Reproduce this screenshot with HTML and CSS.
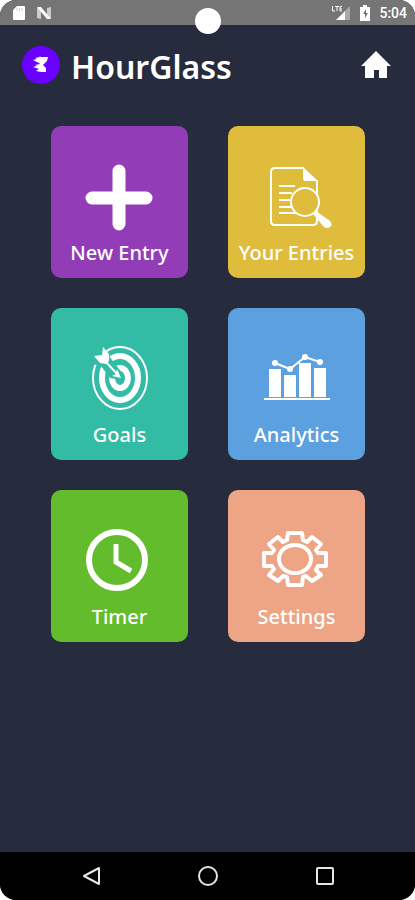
FILE: index.html
```html
<!DOCTYPE html>
<html lang="en">
<head>
  <meta charset="UTF-8" />
  <meta name="viewport" content="width=device-width, initial-scale=1.0"/>
  <title>HourGlass</title>
  <link rel="stylesheet" href="styles.css">
</head>
<body>

<div class="phone">
  <div class="status-bar">
    <div class="status-group">
      <svg width="14" height="16" viewBox="0 0 14 16" aria-hidden="true">
        <path d="M5 1h7q1 0 1 1v12q0 1-1 1H2q-1 0-1-1V5z" fill="#fff"/>
        <path d="M5 3v3M7.500 3v3M10 3v3" stroke="#ccc"/>
      </svg>
      <svg width="16" height="16" viewBox="0 0 16 16" aria-hidden="true">
        <path d="M1 3l4-1v12l-4-1zM11 3l4-1v12l-4-1z" fill="#ccc"/>
        <path d="M1 2h4l10 12h-4z" fill="#fff"/>
      </svg>
    </div>
    <span class="camera"></span>
    <div class="status-group status-right">
      <svg width="20" height="16" viewBox="0 0 20 16" aria-hidden="true">
        <path d="M19 1v14h-5V6z" fill="#aaa"/>
        <path d="M14 6v9H5z" fill="#fff"/>
        <path d="M1.500 1v5H4M4 1.500h4M6 1.500V6M11 1.500H9V6h2M9 4h2" fill="none" stroke="#fff"/>
      </svg>
      <svg width="12" height="16" viewBox="0 0 12 16" aria-hidden="true">
        <path d="M4 0h4v2h3v14H1V2h3z" fill="#fff"/>
        <path d="M7 4L4 9h2v4l3-5H7z" fill="#757575"/>
      </svg>
      <span class="clock">5:04</span>
    </div>
  </div>

  <header class="header">
    <svg class="logo" viewBox="0 0 40 40" aria-hidden="true">
      <circle cx="20" cy="20" r="19" fill="#6a00ff"/>
      <path d="M18 11l2 1h7l-1 4-4 4 3 3v4h-5l-5-1 3-2-6-2 4-1-2-1 5-1-1-1-6-3 4-1-2-1 5-1z" fill="#fff"/>
    </svg>
    <h1>HourGlass</h1>
    <a class="home" href="#" aria-label="Home">
      <svg width="32" height="32" viewBox="0 0 32 32" aria-hidden="true">
        <path d="M16 2L1 17h4v12h9v-8h5v8h8V17h4z" fill="#fff"/>
      </svg>
    </a>
  </header>

  <main class="menu">
    <a class="tile new-entry" href="#">
      <svg class="icon" viewBox="0 0 80 80" aria-hidden="true">
        <path d="M39 13v53M12 40h54" stroke-width="13" stroke-linecap="round"/>
      </svg>
      <span>New Entry</span>
    </a>

    <a class="tile entries" href="#">
      <svg class="icon" viewBox="0 0 80 80" aria-hidden="true">
        <path d="M60 22v41q0 4-4 4H18q-4 0-4-4V14q0-4 4-4h29" stroke-width="2"/>
        <path class="solid" d="M46 9l15 14H48q-2 0-2-2z"/>
        <path d="M22 28h16M22 35h13M22 42h11M22 49h12M22 55h17" stroke-width="2"/>
        <circle class="lens" cx="48" cy="44" r="14" stroke-width="2"/>
        <path class="solid" d="M56 56l3-3 14 10q3 4 0 6-3 2-6 0z"/>
      </svg>
      <span>Your Entries</span>
    </a>

    <a class="tile goals" href="#">
      <svg class="icon" viewBox="0 0 80 80" aria-hidden="true">
        <ellipse cx="40" cy="38" rx="27" ry="31" stroke-width="2"/>
        <ellipse cx="40" cy="38" rx="18" ry="22" stroke-width="6"/>
        <ellipse cx="40" cy="38" rx="8" ry="10" stroke-width="6"/>
        <path class="cut" d="M12 8h13l4 8 13 17v7l-12-2-9-12-9-2z"/>
        <path class="solid" d="M14 16l8-1 1-8 6 7v7l-3 3-6-1z"/>
        <path d="M25 21l14 15" stroke-width="2"/>
        <path class="solid" d="M41 38l-9-2 4-2 1-5z"/>
      </svg>
      <span>Goals</span>
    </a>

    <a class="tile analytics" href="#">
      <svg class="icon" viewBox="0 0 80 80" aria-hidden="true">
        <path class="solid" d="M12 29h12v28H12zM27 35h12v22H27zM42 23h12v34H42zM57 28h12v29H57z"/>
        <path d="M7 59h66" stroke-width="2"/>
        <path d="M18 23l15 6 15-12 15 5" stroke-width="2"/>
        <g class="solid">
          <circle cx="18" cy="23" r="3"/>
          <circle cx="33" cy="29" r="3"/>
          <circle cx="48" cy="17" r="3"/>
          <circle cx="63" cy="22" r="3"/>
        </g>
      </svg>
      <span>Analytics</span>
    </a>

    <a class="tile timer" href="#">
      <svg class="icon" viewBox="0 0 80 80" aria-hidden="true">
        <circle cx="37" cy="38" r="28" stroke-width="6"/>
        <path d="M36 22v18l15 9" stroke-width="5"/>
      </svg>
      <span>Timer</span>
    </a>

    <a class="tile settings" href="#">
      <svg class="icon" viewBox="0 0 80 80" aria-hidden="true">
        <path d="M31 11h14l1 7 4 2 5-5 9 7-5 6 2 3h8v13h-8l-2 4 5 5-9 6-6-5-3 1-1 8H31l-1-8-4-1-5 5-9-6 5-6-2-3H7V31h8l2-3-5-6 9-7 5 5 4-2z" stroke-width="4" stroke-linejoin="round"/>
        <ellipse cx="38" cy="37" rx="16" ry="14" stroke-width="4"/>
      </svg>
      <span>Settings</span>
    </a>
  </main>

  <nav class="nav-bar">
    <button type="button" aria-label="Back">
      <svg width="20" height="20" viewBox="0 0 20 20" aria-hidden="true">
        <path d="M18 2v16L3 10z"/>
      </svg>
    </button>
    <button type="button" aria-label="Home screen">
      <svg width="20" height="20" viewBox="0 0 20 20" aria-hidden="true">
        <circle cx="10" cy="10" r="9"/>
      </svg>
    </button>
    <button type="button" aria-label="Recent apps">
      <svg width="20" height="20" viewBox="0 0 20 20" aria-hidden="true">
        <rect x="2" y="2" width="16" height="16" rx="1"/>
      </svg>
    </button>
  </nav>
</div>

</body>
</html>
```
FILE: styles.css
```css
* {
  box-sizing: border-box;
}

body {
  margin: 0;
  background: #fff;
  font-family: "Noto Sans", "Open Sans", sans-serif;
  color: #fff;
}

.phone {
  display: flex;
  flex-direction: column;
  min-height: 100vh;
  background: #262b3e;
  border-radius: 16px;
  overflow: hidden;
}

/* status bar */
.status-bar {
  position: relative;
  display: flex;
  justify-content: space-between;
  align-items: center;
  height: 25px;
  padding: 0 8px 0 12px;
  background: #757575;
}

.status-group {
  display: flex;
  align-items: center;
  gap: 10px;
}

.status-right {
  gap: 8px;
}

.clock {
  font-family: Roboto, sans-serif;
  font-size: 14px;
  font-weight: 500;
}

.camera {
  position: absolute;
  top: 8px;
  left: 50%;
  width: 26px;
  height: 26px;
  margin-left: -13px;
  border-radius: 50%;
  background: #fff;
}

/* header */
.header {
  display: flex;
  align-items: center;
  height: 80px;
  padding: 0 23px 0 21px;
}

.logo {
  width: 40px;
  height: 40px;
}

h1 {
  margin: 0 0 0 10px;
  padding-top: 4px;
  font-size: 32px;
  font-weight: 600;
  line-height: 40px;
}

.home {
  display: flex;
  margin-left: auto;
}

/* tiles */
.menu {
  flex: 1;
  display: grid;
  grid-template-columns: 1fr 1fr;
  align-content: start;
  gap: 30px 40px;
  padding: 21px 50px 30px 51px;
}

.tile {
  display: flex;
  flex-direction: column;
  align-items: center;
  padding: 32px 0 10px;
  border-radius: 10px;
  color: #fff;
  font-size: 20px;
  font-weight: 500;
  line-height: 30px;
  text-decoration: none;
  white-space: nowrap;
}

.icon {
  width: 80px;
  height: 80px;
  fill: none;
  stroke: #fff;
}

.icon .solid {
  fill: #fff;
  stroke: none;
}

.icon .lens {
  fill: #e0bc3c;
}

.icon .cut {
  fill: #32bca5;
  stroke: none;
}

.new-entry {
  background: #933cb8;
}

.entries {
  background: #e0bc3c;
}

.goals {
  background: #32bca5;
}

.analytics {
  background: #5ca0df;
}

.timer {
  background: #62bc2c;
}

.settings {
  background: #eea585;
}

/* bottom navigation */
.nav-bar {
  display: flex;
  justify-content: center;
  gap: 77px;
  padding: 4px 0;
  background: #000;
}

.nav-bar button {
  display: flex;
  align-items: center;
  justify-content: center;
  width: 40px;
  height: 40px;
  padding: 0;
  border: none;
  background: none;
  cursor: pointer;
}

.nav-bar svg {
  fill: none;
  stroke: #e6e6e6;
  stroke-width: 2;
  stroke-linejoin: round;
}
```
